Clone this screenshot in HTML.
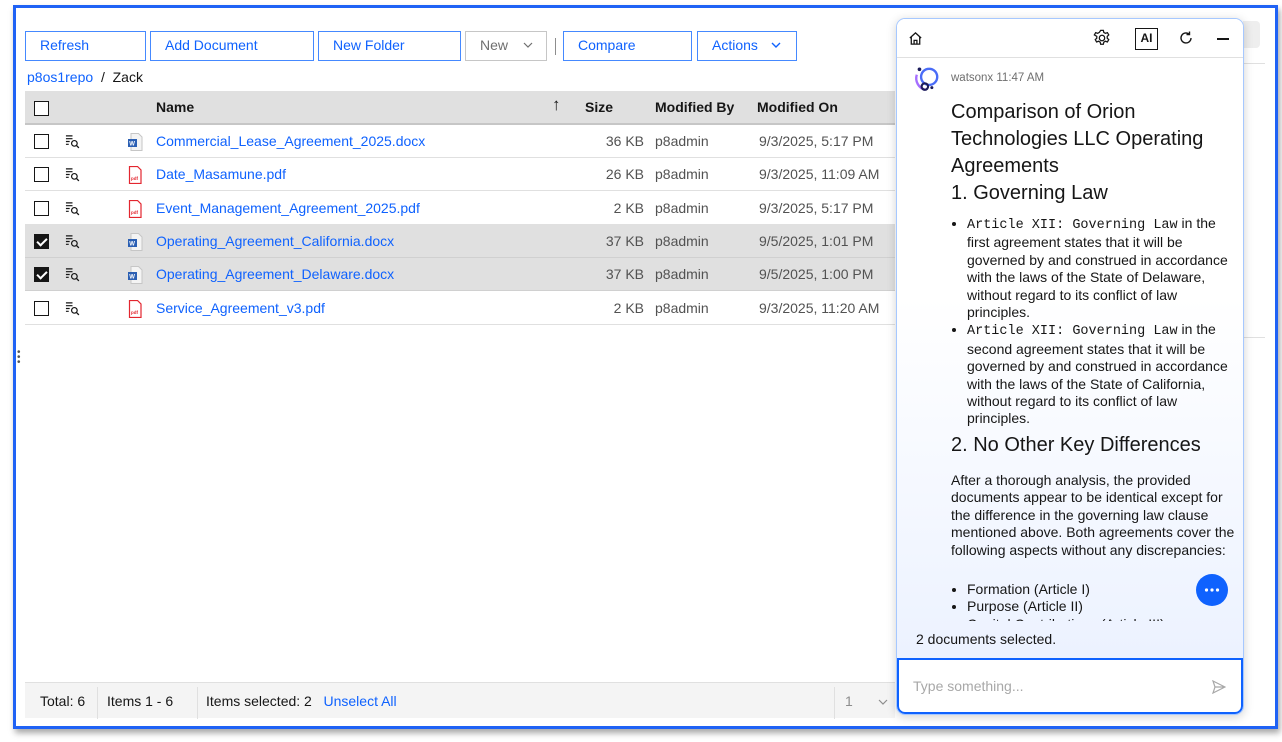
<!DOCTYPE html>
<html><head><meta charset="utf-8"><style>
*{box-sizing:border-box;margin:0;padding:0}
body{width:1282px;height:742px;background:#fff;font-family:"Liberation Sans",sans-serif;font-size:14px;color:#161616;position:relative;overflow:hidden}
.a{position:absolute}
.frame{left:13px;top:5px;width:1265px;height:724px;border:3px solid #1f62f5;box-shadow:2px 4px 6px rgba(0,0,0,.35)}
.btn{position:absolute;top:31px;height:30px;border:1.5px solid #4589ff;color:#0f62fe;font-size:14px;line-height:27px;padding-left:14px;background:#fff}
.lnk{color:#0f62fe}
.row{position:absolute;left:25px;width:870px;height:33px;border-bottom:1px solid #e0e0e0}
.row.sel{background:#e0e0e0;border-bottom:1px solid #d0d0d0}
.row span{position:absolute;top:8px}
.cb{position:absolute;left:9px;top:9px;width:15px;height:15px;border:1.5px solid #161616;background:#fff}
.cb.on{background:#161616;}
.cb.on:after{content:"";position:absolute;left:4px;top:1px;width:4px;height:8px;border:solid #fff;border-width:0 2px 2px 0;transform:rotate(45deg)}
.sz{right:251px;text-align:right;color:#525252}
.by{left:630px;color:#525252}
.on2{left:734px;color:#525252}
.nm{left:131px;color:#0f62fe}
.ic{left:40px;top:9px}
.doc{left:102px;top:8px;width:16px;height:18px}
.panel{left:896px;top:18px;width:348px;height:697px;border:1px solid #a6c8ff;border-radius:9px;background:linear-gradient(#fff 40%,#e9f0ff);box-shadow:0 2px 10px rgba(0,0,0,.18);overflow:hidden}
.ptxt{left:54px;width:285px;font-size:14px;line-height:17.4px;color:#161616}
.mono{font-family:"Liberation Mono",monospace;font-size:13.5px}
ul{padding-left:16px}
.foot{left:25px;top:682px;width:870px;height:36px;background:#f4f4f4;border-top:1px solid #e0e0e0}
.foot span{position:absolute;top:10px;color:#161616}
.foot span.ul{position:static;color:#0f62fe}
.fdiv{position:absolute;top:4px;width:1px;height:32px;background:#e0e0e0}
</style></head><body>
<svg width="0" height="0" style="position:absolute"><defs>
<symbol id="pv" viewBox="0 0 16 16"><path d="M1 2h7M1 5h7M1 8h4M1 11h3" stroke="#161616" stroke-width="1.3" fill="none"/><circle cx="10" cy="10" r="3" stroke="#161616" stroke-width="1.3" fill="none"/><path d="M12.2 12.2l2.6 2.6" stroke="#161616" stroke-width="1.4"/></symbol>
<symbol id="wd" viewBox="0 0 16 18"><path d="M4 .5h7.5l3.5 3.5v13.5H4z" fill="#f4f4f4" stroke="#c6c6c6"/><rect x="1" y="6" width="9" height="8" fill="#2b5fb3"/><text x="2.3" y="12.6" font-size="6" fill="#fff" font-family="Liberation Sans" font-weight="bold">W</text></symbol>
<symbol id="pd" viewBox="0 0 16 18"><path d="M2.5 .5h8l3.5 3.5v13.5H2.5z" fill="#fff" stroke="#e3262f" stroke-width="1.2"/><text x="4" y="14" font-size="4.5" fill="#e3262f" font-family="Liberation Sans" font-weight="bold">pdf</text></symbol>
</defs></svg>
<div class="a frame"></div>
<div class="btn" style="left:25px;width:121px">Refresh</div>
<div class="btn" style="left:150px;width:164px">Add Document</div>
<div class="btn" style="left:318px;width:143px">New Folder</div>
<div class="btn" style="left:465px;width:82px;border-color:#c6c6c6;color:#6f6f6f">New<svg style="position:absolute;left:57px;top:10px" width="10" height="7" viewBox="0 0 10 7"><path d="M1 1l4 4 4-4" stroke="#6f6f6f" fill="none" stroke-width="1.2"/></svg></div>
<div class="a" style="left:555px;top:38px;width:1px;height:17px;background:#8d8d8d"></div>
<div class="btn" style="left:563px;width:129px">Compare</div>
<div class="btn" style="left:697px;width:100px">Actions<svg style="position:absolute;left:73px;top:10px" width="10" height="7" viewBox="0 0 10 7"><path d="M1 1l4 4 4-4" stroke="#0f62fe" fill="none" stroke-width="1.4"/></svg></div>
<div class="a" style="left:27px;top:69px"><span class="lnk">p8os1repo</span> &nbsp;/ &nbsp;Zack</div>
<div class="a" style="left:1243px;top:21px;width:17px;height:27px;background:#eee;border-radius:0 4px 4px 0"></div>
<div class="a" style="left:1243px;top:63px;width:22px;height:1px;background:#e0e0e0"></div>
<div class="a" style="left:1243px;top:337px;width:22px;height:1px;background:#e0e0e0"></div>

<div class="row sel" style="top:91px;height:34px;background:#e0e0e0;border-bottom:2px solid #c6c6c6">
<div class="cb" style="top:10px"></div>
<span style="left:131px;font-weight:bold">Name</span><span style="left:527px;top:4px;font-size:17px">↑</span>
<span style="left:560px;font-weight:bold">Size</span><span style="left:630px;font-weight:bold">Modified By</span><span style="left:732px;font-weight:bold">Modified On</span></div>

<div class="row" style="top:125px"><div class="cb"></div><svg class="a ic" width="15" height="15"><use href="#pv"/></svg><svg class="a doc"><use href="#wd"/></svg><span class="nm">Commercial_Lease_Agreement_2025.docx</span><span class="sz">36 KB</span><span class="by">p8admin</span><span class="on2">9/3/2025, 5:17 PM</span></div>
<div class="row" style="top:158px"><div class="cb"></div><svg class="a ic" width="15" height="15"><use href="#pv"/></svg><svg class="a doc"><use href="#pd"/></svg><span class="nm">Date_Masamune.pdf</span><span class="sz">26 KB</span><span class="by">p8admin</span><span class="on2">9/3/2025, 11:09 AM</span></div>
<div class="row" style="top:192px"><div class="cb"></div><svg class="a ic" width="15" height="15"><use href="#pv"/></svg><svg class="a doc"><use href="#pd"/></svg><span class="nm">Event_Management_Agreement_2025.pdf</span><span class="sz">2 KB</span><span class="by">p8admin</span><span class="on2">9/3/2025, 5:17 PM</span></div>
<div class="row sel" style="top:225px"><div class="cb on"></div><svg class="a ic" width="15" height="15"><use href="#pv"/></svg><svg class="a doc"><use href="#wd"/></svg><span class="nm">Operating_Agreement_California.docx</span><span class="sz">37 KB</span><span class="by">p8admin</span><span class="on2">9/5/2025, 1:01 PM</span></div>
<div class="row sel" style="top:258px"><div class="cb on"></div><svg class="a ic" width="15" height="15"><use href="#pv"/></svg><svg class="a doc"><use href="#wd"/></svg><span class="nm">Operating_Agreement_Delaware.docx</span><span class="sz">37 KB</span><span class="by">p8admin</span><span class="on2">9/5/2025, 1:00 PM</span></div>
<div class="row" style="top:292px"><div class="cb"></div><svg class="a ic" width="15" height="15"><use href="#pv"/></svg><svg class="a doc"><use href="#pd"/></svg><span class="nm">Service_Agreement_v3.pdf</span><span class="sz">2 KB</span><span class="by">p8admin</span><span class="on2">9/3/2025, 11:20 AM</span></div>
<div class="a" style="left:17px;top:350px;font-size:10px;line-height:5px;color:#555">•<br>•<br>•</div>

<div class="a foot">
<span style="left:15px">Total: 6</span><div class="fdiv" style="left:72px"></div>
<span style="left:82px">Items 1 - 6</span><div class="fdiv" style="left:172px"></div>
<span style="left:181px">Items selected: 2 &nbsp;&nbsp;<span class="ul">Unselect All</span></span>
<div class="fdiv" style="left:809px"></div><span style="left:820px;color:#8d8d8d">1</span><svg style="position:absolute;left:853px;top:16px" width="10" height="7" viewBox="0 0 10 7"><path d="M1 1l4 4 4-4" stroke="#8d8d8d" fill="none" stroke-width="1.2"/></svg>
</div>

<div class="a panel">
<div class="a" style="left:0;top:0;width:348px;height:39px;background:#fff;border-bottom:1px solid #e0e0e0"></div>
<svg class="a" style="left:11px;top:12px" width="15" height="15" viewBox="0 0 16 16" fill="none" stroke="#161616" stroke-width="1.4"><path d="M2 7.5L8 2l6 5.5M3.5 6v8h9V6M6.5 14v-4h3v4"/></svg>
<svg class="a" style="left:196px;top:10px" width="18" height="18" viewBox="0 0 20 20" fill="none" stroke="#161616" stroke-width="1.4"><circle cx="10" cy="10" r="3"/><path d="M8.5 1.5h3l.5 2.3 1.8 1 2.2-.8 1.5 2.6-1.7 1.6v2l1.7 1.6-1.5 2.6-2.2-.8-1.8 1-.5 2.3h-3l-.5-2.3-1.8-1-2.2.8-1.5-2.6 1.7-1.6v-2L1.5 6.6 3 4l2.2.8 1.8-1z"/></svg>
<div class="a" style="left:238px;top:9px;width:23px;height:22px;border:1.5px solid #161616;font-size:12px;font-weight:bold;text-align:center;line-height:19px">AI</div>
<svg class="a" style="left:281px;top:11px" width="16" height="16" viewBox="0 0 16 16" fill="none" stroke="#161616" stroke-width="1.4"><path d="M13 8a5 5 0 1 1-1.8-3.9M11.5 1.5v3h-3"/></svg>
<div class="a" style="left:320px;top:19px;width:12px;height:1.5px;background:#161616"></div>
<svg class="a" style="left:16px;top:46px" width="28" height="28" viewBox="0 0 26 26" fill="none"><circle cx="15" cy="11" r="7.5" stroke="#4a6cf7" stroke-width="2.2"/><path d="M3.5 9a11 11 0 0 0 8 14" stroke="#a56eff" stroke-width="2.2"/><circle cx="11" cy="20" r="3" stroke="#1c1c5a" stroke-width="2"/><circle cx="6" cy="4" r="1.7" fill="#1c1c5a"/><circle cx="17.5" cy="21" r="1.4" fill="#1c1c5a"/></svg>
<div class="a" style="left:54px;top:53px;font-size:11.5px;color:#6f6f6f">watsonx 11:47 AM</div>
<div class="a ptxt" style="top:80px;font-size:20px;line-height:27px">Comparison of Orion Technologies LLC Operating Agreements<br>1. Governing Law</div>
<div class="a ptxt" style="top:196px"><ul>
<li><span class="mono">Article XII: Governing Law</span> in the first agreement states that it will be governed by and construed in accordance with the laws of the State of Delaware, without regard to its conflict of law principles.</li>
<li><span class="mono">Article XII: Governing Law</span> in the second agreement states that it will be governed by and construed in accordance with the laws of the State of California, without regard to its conflict of law principles.</li></ul></div>
<div class="a ptxt" style="top:413px;font-size:20px;line-height:27px">2. No Other Key Differences</div>
<div class="a ptxt" style="top:453px">After a thorough analysis, the provided documents appear to be identical except for the difference in the governing law clause mentioned above. Both agreements cover the following aspects without any discrepancies:</div>
<div class="a ptxt" style="top:562px;height:40px;overflow:hidden"><ul><li>Formation (Article I)</li><li>Purpose (Article II)</li><li>Capital Contributions (Article III)</li></ul></div>
<div class="a" style="left:299px;top:555px;width:32px;height:32px;border-radius:50%;background:#0f62fe"><svg width="32" height="32"><circle cx="10.5" cy="16" r="1.6" fill="#fff"/><circle cx="16" cy="16" r="1.6" fill="#fff"/><circle cx="21.5" cy="16" r="1.6" fill="#fff"/></svg></div>
<div class="a" style="left:19px;top:612px;font-size:14px">2 documents selected.</div>
<div class="a" style="left:0;top:639px;width:346px;height:56px;background:#fff;border:2px solid #0f62fe;border-radius:0 0 8px 8px"></div>
<div class="a" style="left:16px;top:659px;color:#a8a8a8;font-size:14px">Type something...</div>
<svg class="a" style="left:315px;top:661px" width="14" height="14" viewBox="0 0 14 14" fill="none" stroke="#a8a8a8" stroke-width="1.2"><path d="M1 1l12 6-12 6 2-6zM3 7h10"/></svg>
</div>
</body></html>
